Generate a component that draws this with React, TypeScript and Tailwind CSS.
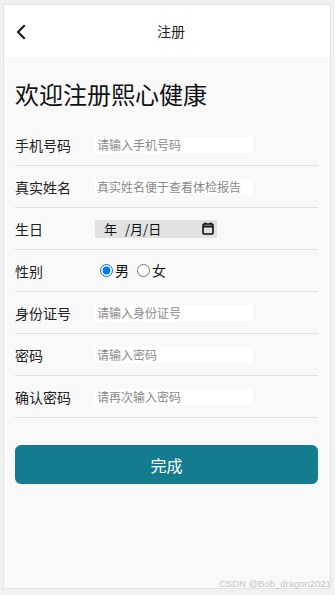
import React from "react";

const font = { fontFamily: '"Noto Sans CJK SC", "Noto Sans", sans-serif' };

function Row({ label, children }: { label: string; children: React.ReactNode }) {
  return (
    <div className="flex h-[42px] items-center border-b border-[#e3e3e3]">
      <div className="w-[80px] pt-[2px] text-[14px] text-[#222]">{label}</div>
      <div className="flex items-center">{children}</div>
    </div>
  );
}

function TextInput({ placeholder, type = "text" }: { placeholder: string; type?: string }) {
  return (
    <input
      type={type}
      placeholder={placeholder}
      className="h-[16px] w-[158px] bg-white px-[2px] text-[12px] leading-[16px] text-[#333] outline-none placeholder:text-[#8a8a8a]"
      style={font}
    />
  );
}

export default function App() {
  return (
    <div className="relative h-[595px] w-[335px] bg-[#f1f1f1] pb-[6px] pl-[3px] pr-[4px] pt-[4px]" style={font}>
      <div className="flex h-full flex-col border border-[#e4e4e4] bg-[#f9f9f9]">
        <div className="relative flex h-[52px] items-center justify-center bg-white pl-[8px]">
          <svg
            className="absolute left-[11px] top-[19px]"
            width="14"
            height="16"
            viewBox="0 0 14 16"
            fill="none"
            stroke="#111"
            strokeWidth="2"
            strokeLinecap="square"
          >
            <path d="M9 2 L3 8 L9 14" />
          </svg>
          <span className="text-[14px] text-[#222]">注册</span>
        </div>
        <div className="pl-[11px] pr-[12px]">
          <h1 className="mt-[19px] mb-[12px] text-[24px] leading-[36px] text-[#111]">欢迎注册熙心健康</h1>
          <Row label="手机号码">
            <TextInput placeholder="请输入手机号码" />
          </Row>
          <Row label="真实姓名">
            <TextInput placeholder="真实姓名便于查看体检报告" />
          </Row>
          <Row label="生日">
            <div className="flex h-[18px] w-[122px] items-center bg-[#e1e1e1] pl-[9px] pr-[3px] text-[13px] text-[#111]">
              <span>年</span>
              <span className="ml-[8px]">/月/日</span>
              <svg className="ml-auto" width="12" height="13" viewBox="0 0 12 13" fill="none" stroke="#111" strokeWidth="1.6">
                <rect x="1" y="2" width="10" height="10" rx="1" />
                <path d="M1 4.5 H11" strokeWidth="2" />
                <path d="M3.5 0.5 V2.5 M8.5 0.5 V2.5" />
              </svg>
            </div>
          </Row>
          <Row label="性别">
            <label className="flex items-center text-[14px] text-[#111]">
              <input type="radio" name="sex" defaultChecked className="m-0 ml-[5px] mr-[2px] h-[13px] w-[13px]" />
              男
            </label>
            <label className="ml-[8px] flex items-center text-[14px] text-[#111]">
              <input type="radio" name="sex" className="m-0 mr-[2px] h-[13px] w-[13px]" />
              女
            </label>
          </Row>
          <Row label="身份证号">
            <TextInput placeholder="请输入身份证号" />
          </Row>
          <Row label="密码">
            <TextInput placeholder="请输入密码" type="password" />
          </Row>
          <Row label="确认密码">
            <TextInput placeholder="请再次输入密码" type="password" />
          </Row>
          <button className="mt-[27px] flex h-[39px] w-full items-center justify-center rounded-[6px] bg-[#137c8e] text-[16px] text-white">
            完成
          </button>
        </div>
      </div>
      <div
        className="absolute bottom-[5px] right-[4px] text-[9.5px] leading-[12px] text-[#c4c4c4]"
        style={{ fontFamily: '"Liberation Sans", Arial, sans-serif' }}
      >
        CSDN @Bob_dragon2021
      </div>
    </div>
  );
}
